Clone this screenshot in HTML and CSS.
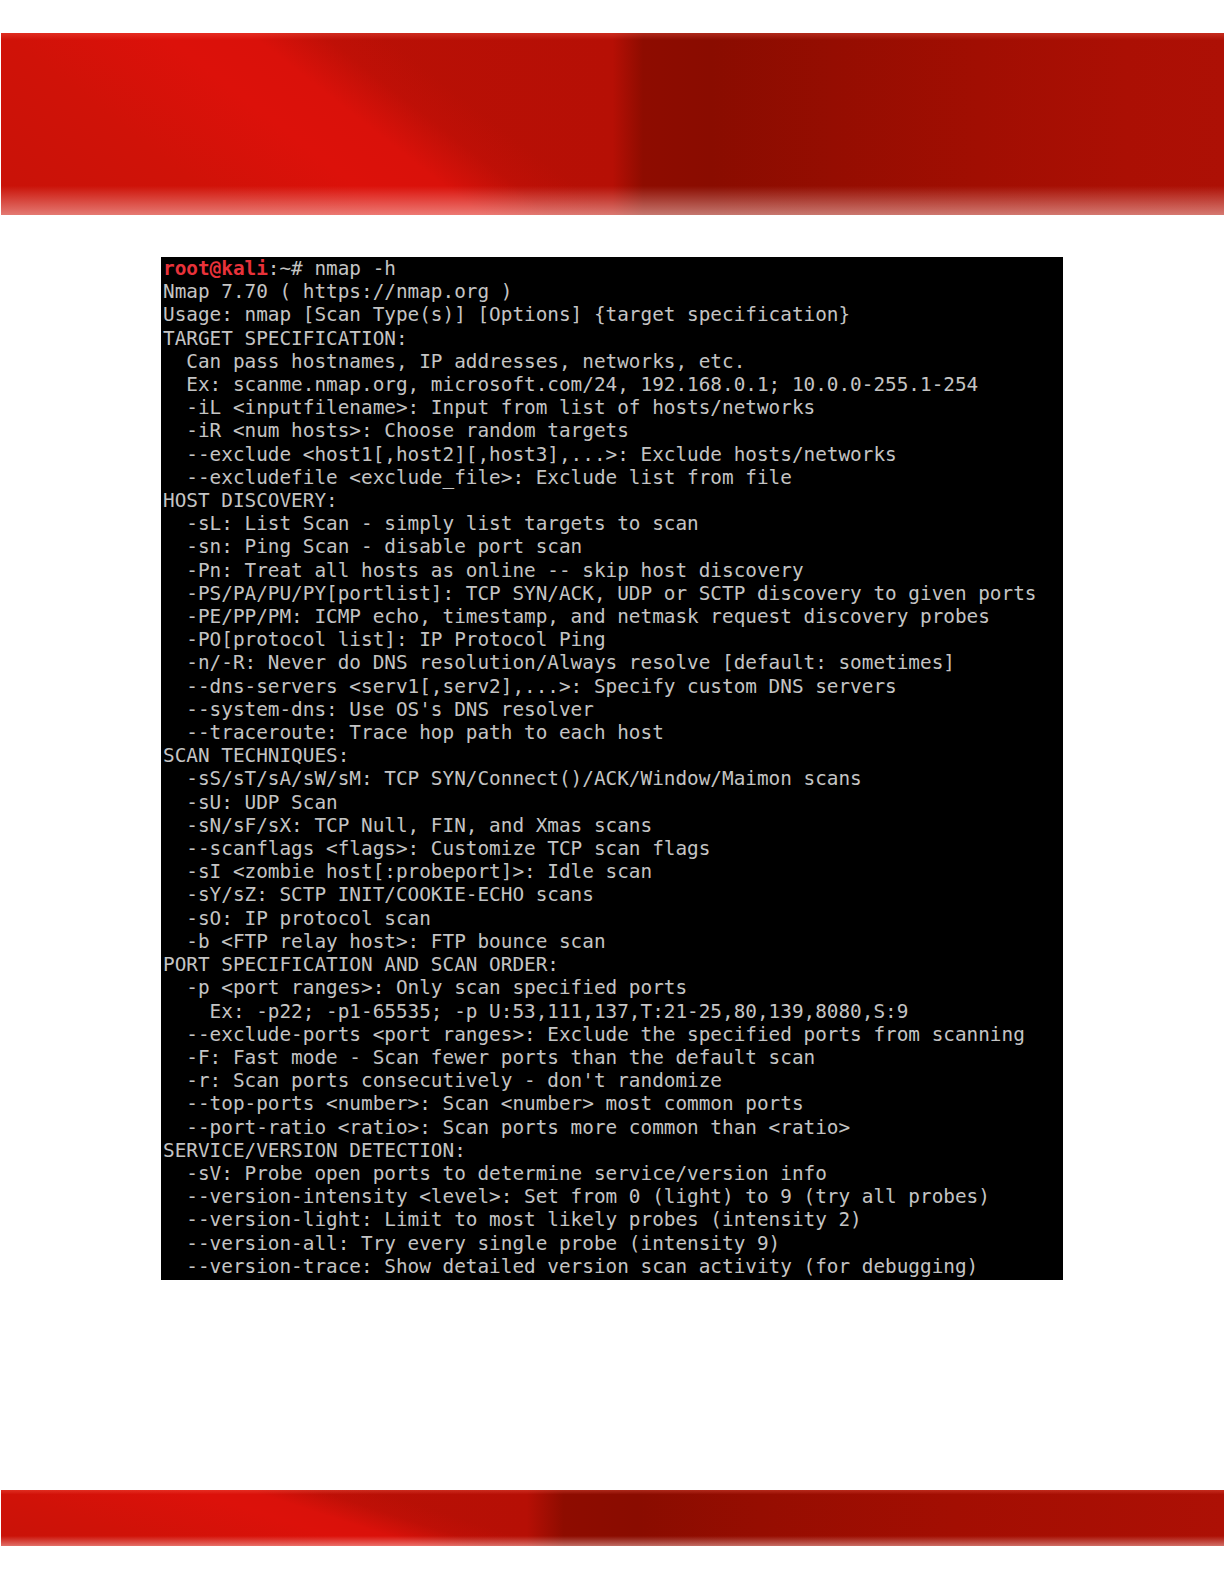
FILE: index.html
```html
<!DOCTYPE html>
<html lang="en">
<head>
    <meta charset="UTF-8">
    <meta name="viewport" content="width=device-width, initial-scale=1.0">
    <title>nmap -h</title>
    <link rel="stylesheet" href="styles.css">
</head>
<body>
    <header class="band band-top"></header>

    <main class="page">
<pre class="terminal"><span class="prompt">root@kali</span>:~# nmap -h
Nmap 7.70 ( https://nmap.org )
Usage: nmap [Scan Type(s)] [Options] {target specification}
TARGET SPECIFICATION:
  Can pass hostnames, IP addresses, networks, etc.
  Ex: scanme.nmap.org, microsoft.com/24, 192.168.0.1; 10.0.0-255.1-254
  -iL &lt;inputfilename&gt;: Input from list of hosts/networks
  -iR &lt;num hosts&gt;: Choose random targets
  --exclude &lt;host1[,host2][,host3],...&gt;: Exclude hosts/networks
  --excludefile &lt;exclude_file&gt;: Exclude list from file
HOST DISCOVERY:
  -sL: List Scan - simply list targets to scan
  -sn: Ping Scan - disable port scan
  -Pn: Treat all hosts as online -- skip host discovery
  -PS/PA/PU/PY[portlist]: TCP SYN/ACK, UDP or SCTP discovery to given ports
  -PE/PP/PM: ICMP echo, timestamp, and netmask request discovery probes
  -PO[protocol list]: IP Protocol Ping
  -n/-R: Never do DNS resolution/Always resolve [default: sometimes]
  --dns-servers &lt;serv1[,serv2],...&gt;: Specify custom DNS servers
  --system-dns: Use OS's DNS resolver
  --traceroute: Trace hop path to each host
SCAN TECHNIQUES:
  -sS/sT/sA/sW/sM: TCP SYN/Connect()/ACK/Window/Maimon scans
  -sU: UDP Scan
  -sN/sF/sX: TCP Null, FIN, and Xmas scans
  --scanflags &lt;flags&gt;: Customize TCP scan flags
  -sI &lt;zombie host[:probeport]&gt;: Idle scan
  -sY/sZ: SCTP INIT/COOKIE-ECHO scans
  -sO: IP protocol scan
  -b &lt;FTP relay host&gt;: FTP bounce scan
PORT SPECIFICATION AND SCAN ORDER:
  -p &lt;port ranges&gt;: Only scan specified ports
    Ex: -p22; -p1-65535; -p U:53,111,137,T:21-25,80,139,8080,S:9
  --exclude-ports &lt;port ranges&gt;: Exclude the specified ports from scanning
  -F: Fast mode - Scan fewer ports than the default scan
  -r: Scan ports consecutively - don't randomize
  --top-ports &lt;number&gt;: Scan &lt;number&gt; most common ports
  --port-ratio &lt;ratio&gt;: Scan ports more common than &lt;ratio&gt;
SERVICE/VERSION DETECTION:
  -sV: Probe open ports to determine service/version info
  --version-intensity &lt;level&gt;: Set from 0 (light) to 9 (try all probes)
  --version-light: Limit to most likely probes (intensity 2)
  --version-all: Try every single probe (intensity 9)
  --version-trace: Show detailed version scan activity (for debugging)</pre>
    </main>

    <footer class="band band-bottom"></footer>
</body>
</html>
```

FILE: styles.css
```css
* {
    margin: 0;
    padding: 0;
    box-sizing: border-box;
}

body {
    background-color: #fff;
    font-family: "DejaVu Sans Mono", "Liberation Mono", monospace;
}

/* red ribbon at top and bottom of the page */
.band {
    margin-left: 1px;
}

.band-top {
    margin-top: 33px;
    height: 182px;
    background:
        linear-gradient(180deg, rgba(255, 110, 90, 0.3) 0, rgba(255, 110, 90, 0) 4%,
            rgba(255, 255, 255, 0) 84%, rgba(255, 225, 220, 0.5) 100%),
        linear-gradient(38deg, #c81208 0%, #d01208 16%, #dc110a 27%, #da110a 33%,
            rgba(200, 16, 8, 0.4) 38%, rgba(190, 16, 6, 0) 42%),
        linear-gradient(90deg, #bd1106 0%, #b60f05 50%, #8e0c00 52.5%, #8a0c00 58%,
            #950d01 68%, #a10e02 80%, #ab0f04 92%, #ad1005 100%);
}

.band-bottom {
    margin-top: 210px;
    height: 56px;
    background:
        linear-gradient(180deg, rgba(255, 110, 90, 0.3) 0, rgba(255, 110, 90, 0) 8%,
            rgba(255, 255, 255, 0) 82%, rgba(255, 225, 220, 0.45) 100%),
        linear-gradient(18deg, #c81208 0%, #d01208 12%, #dc110a 26%, #da110a 30%,
            rgba(200, 16, 8, 0.4) 35%, rgba(190, 16, 6, 0) 39%),
        linear-gradient(90deg, #bd1106 0%, #b60f05 43%, #8e0c00 46%, #8a0c00 52%,
            #960d01 62%, #a30e02 78%, #ad1005 100%);
}

.page {
    padding: 42px 0 0 161px;
}

.terminal {
    width: 902px;
    background-color: #000;
    color: #c4c4c4;
    font-family: "DejaVu Sans Mono", monospace;
    font-size: 19.35px;
    line-height: 23.2px;
    padding: 0 0 2px 2px;
    white-space: pre;
    overflow: hidden;
}

.prompt {
    color: #e8323a;
    font-weight: bold;
}
```
